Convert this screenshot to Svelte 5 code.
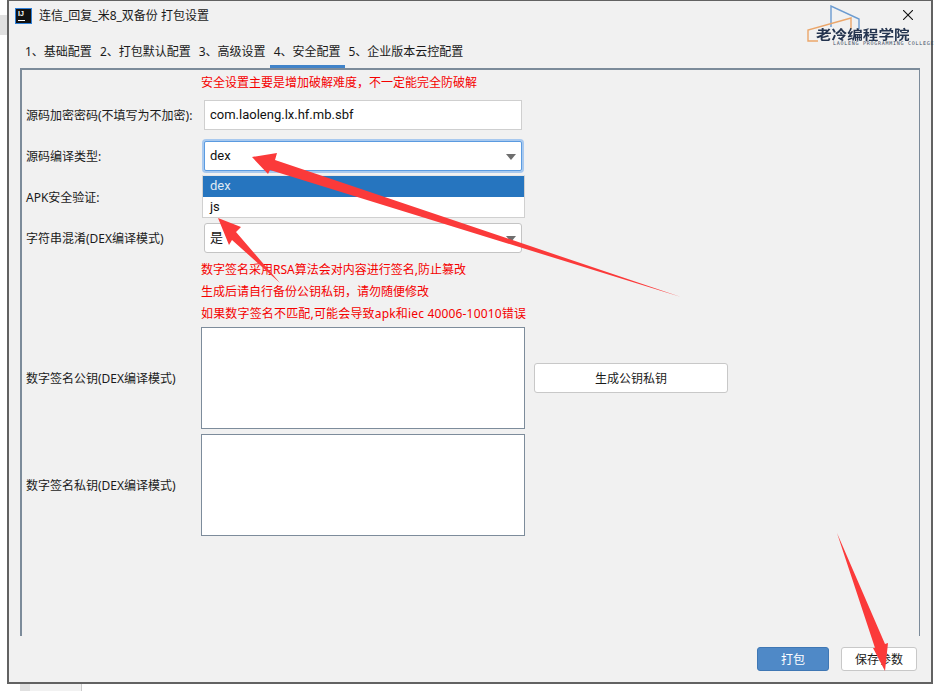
<script>
  const tabs = ['1、基础配置', '2、打包默认配置', '3、高级设置', '4、安全配置', '5、企业版本云控配置'];
  const active = 3;
  const hints = [
    '数字签名采用RSA算法会对内容进行签名,防止篡改',
    '生成后请自行备份公钥私钥，请勿随便修改',
    '如果数字签名不匹配,可能会导致apk和iec 40006-10010错误',
  ];
</script>

<div class="page">
  <div class="behind-left"></div>
  <div class="window">
    <header class="titlebar">
      <div class="app-icon"><span>IJ</span><i></i></div>
      <div class="title">连信_回复_米8_双备份 打包设置</div>
      <svg class="close" width="10" height="10" viewBox="0 0 10 10"><path d="M0 0l10 10M10 0L0 10" stroke="#111" stroke-width="1.1" fill="none" /></svg>
    </header>

    <nav class="tabs">
      {#each tabs as t, i}
        <div class="tab" class:active={i === active}>{t}</div>
      {/each}
    </nav>

    <section class="panel">
      <div class="form">
        <div></div>
        <div class="note top-note">安全设置主要是增加破解难度，不一定能完全防破解</div>

        <div class="label">源码加密密码(不填写为不加密):</div>
        <div class="input">com.laoleng.lx.hf.mb.sbf</div>

        <div class="label">源码编译类型:</div>
        <div class="select-wrap">
          <div class="input select focus">dex<b class="caret"></b></div>
          <div class="menu">
            <div class="opt sel">dex</div>
            <div class="opt">js</div>
          </div>
        </div>

        <div class="label">APK安全验证:</div>
        <div class="input select"></div>

        <div class="label">字符串混淆(DEX编译模式)</div>
        <div class="input select">是<b class="caret"></b></div>

        <div></div>
        <div class="hints">
          {#each hints as h}<div class="note">{h}</div>{/each}
        </div>

        <div class="label">数字签名公钥(DEX编译模式)</div>
        <div class="area-row">
          <div class="area"></div>
          <button class="gen">生成公钥私钥</button>
        </div>

        <div class="label second">数字签名私钥(DEX编译模式)</div>
        <div class="area-row second">
          <div class="area"></div>
        </div>
      </div>
    </section>

    <footer class="actions">
      <button class="btn primary">打包</button>
      <button class="btn save">保存参数</button>
    </footer>

    <div class="logo">
      <svg width="60" height="40" viewBox="0 0 60 40">
        <path d="M24 22V1l28 13v10" fill="none" stroke="#6b9bd0" stroke-width="1.4" />
        <path d="M11 36H1V25l43-12v11" fill="none" stroke="#eba66a" stroke-width="1.4" />
      </svg>
      <div class="logo-cn">老冷编程学院</div>
      <div class="logo-en">LAOLENG PROGRAMMING COLLEGE</div>
    </div>
  </div>
  <div class="behind-bottom"><span></span></div>

  <svg class="arrows" width="940" height="691" viewBox="0 0 940 691">
    <path d="M252 157L277 153L275 160L681 297L270 170L268 174Z" />
    <path d="M218 218L241 227L236 232L280 283L232 240L229 245Z" />
    <path d="M837 533L885 644L888 643L885 671L873 648L875 648Z" />
  </svg>
</div>

<style>
  :global(body) {
    margin: 0;
    background: #fff;
    font-family: "Noto Sans", "Noto Sans CJK SC", sans-serif;
  }
  .page {
    position: relative;
    width: 940px;
    height: 691px;
    overflow: hidden;
    padding-left: 7px;
    box-sizing: border-box;
  }
  .behind-left {
    position: absolute;
    left: 0; top: 15px;
    width: 7px; height: 20px;
    background: #e0e0e0;
  }
  .window {
    position: relative;
    width: 926px;
    height: 684px;
    box-sizing: border-box;
    background: #f1f1f1;
    border: 2px solid #626262;
    border-top-width: 1px;
    color: #1a1a1a;
    font-size: 12px;
    display: flex;
    flex-direction: column;
  }
  .behind-bottom {
    margin-left: 13px;
    width: 61px;
    height: 7px;
    background: #f2f2f2;
    border-right: 1px solid #ccc;
  }
  .behind-bottom span {
    display: block;
    width: 10px; height: 7px;
    background: #e0e0e0;
  }
  .titlebar {
    height: 29px;
    display: flex;
    align-items: center;
    padding: 0 18px 0 6px;
  }
  .app-icon {
    position: relative;
    width: 13px; height: 14px;
    background: #111;
    border: 1px solid #2f80d8;
    color: #fff;
    font: bold 7px/9px "Liberation Sans", sans-serif;
    padding-left: 2px;
  }
  .app-icon i {
    position: absolute;
    left: 2px; bottom: 2px;
    width: 7px; height: 1px;
    background: #fff;
  }
  .title { margin-left: 7px; flex: 1; line-height: 28px; }
  .close { margin-top: -1px; }
  .tabs {
    height: 38px;
    display: flex;
    padding-left: 12px;
    align-items: flex-end;
  }
  .tab {
    height: 27px;
    padding: 0 4px;
    line-height: 22px;
    white-space: nowrap;
    box-sizing: border-box;
  }
  .tab.active { border-bottom: 3px solid #4083c9; }
  .panel {
    height: 568px;
    margin: 0 11px;
    box-sizing: border-box;
    border: solid #7c8b9a;
    border-width: 2px 1px 0 2px;
    padding-left: 4px;
    flex: none;
  }
  .form {
    display: grid;
    grid-template-columns: 175px 1fr;
    grid-template-rows: 19px 30px 30px 30px 30px auto 102px 102px;
    row-gap: 11px;
    align-items: center;
  }
  .label { white-space: nowrap; }
  .note {
    color: #f50000;
    white-space: nowrap;
    line-height: 22px;
  }
  .hints .note:last-child { letter-spacing: 0.17px; }
  .top-note { align-self: start; margin-top: 2px; }
  .form > .input, .select-wrap { margin: 0 3px; }
  .input {
    position: relative;
    width: 318px;
    height: 30px;
    box-sizing: border-box;
    background: #fff;
    border: 1px solid #cfcfcf;
    font-family: Roboto, "Noto Sans CJK SC", sans-serif;
    font-size: 13px;
    line-height: 28px;
    padding-left: 5px;
    color: #111;
  }
  .select { border-radius: 3px; border-color: #c4c4c4; }
  .focus {
    border: 1px solid #5b9be0;
    box-shadow: 0 0 0 2px #a8c9ef;
    border-radius: 2px;
  }
  .caret {
    position: absolute;
    right: 5px; top: 12px;
    border: solid transparent;
    border-width: 6px 5.5px 0;
    border-top-color: #6e6e6e;
  }
  .select-wrap { position: relative; }
  .menu {
    position: absolute;
    z-index: 2;
    left: -2px; top: 34px;
    width: 323px;
    height: 43px;
    box-sizing: border-box;
    background: #fff;
    border: 1px solid #d0d0d0;
    border-top-color: #e6e6e6;
    font-family: Roboto, "Noto Sans CJK SC", sans-serif;
    font-size: 13px;
    color: #111;
  }
  .opt { height: 21px; line-height: 20px; padding-left: 7px; }
  .opt.sel { background: #2675bf; color: #dfe9f3; }
  .hints { margin-top: -5px; margin-bottom: -9px; }
  .area-row { display: flex; align-items: center; }
  .second { margin-top: -12px; }
  .area {
    width: 324px;
    height: 102px;
    box-sizing: border-box;
    background: #fff;
    border: 1px solid #7d8c9b;
  }
  .gen {
    width: 194px;
    height: 30px;
    margin-left: 9px;
    background: #fff;
    border: 1px solid #c8c8c8;
    border-radius: 3px;
    font: inherit;
    color: #1a1a1a;
    padding: 0;
  }
  .actions {
    flex: 1;
    display: flex;
    justify-content: flex-end;
    gap: 12px;
    padding: 11px 14px 0 0;
  }
  .btn {
    height: 24px;
    padding: 0;
    border-radius: 3px;
    font: inherit;
  }
  .primary {
    width: 72px;
    background: #4f89c7;
    border: 1px solid #3f77b4;
    color: #fff;
  }
  .save {
    width: 76px;
    background: #fff;
    border: 1px solid #c8c8c8;
    color: #1a1a1a;
  }
  .logo {
    position: absolute;
    left: 798px; top: 4px;
    width: 132px;
    height: 44px;
  }
  .logo svg { position: absolute; left: 0; top: 0; }
  .logo-cn {
    position: absolute;
    left: 9px; top: 23px;
    font-family: "Noto Sans CJK SC", sans-serif;
    font-size: 13px;
    line-height: 12px;
    font-weight: 700;
    color: #24344f;
    white-space: nowrap;
    transform: scaleX(1.2);
    transform-origin: left center;
    filter: blur(0.5px);
  }
  .logo-en {
    position: absolute;
    left: 26px; top: 35px;
    font-size: 5px;
    line-height: 6px;
    letter-spacing: 0.74px;
    color: #3c4a62;
    white-space: nowrap;
    font-family: "DejaVu Sans Mono", monospace;
  }
  .arrows {
    position: absolute;
    left: 0; top: 0;
    pointer-events: none;
    z-index: 5;
  }
  .arrows path { fill: #fb3a3a; }
</style>
